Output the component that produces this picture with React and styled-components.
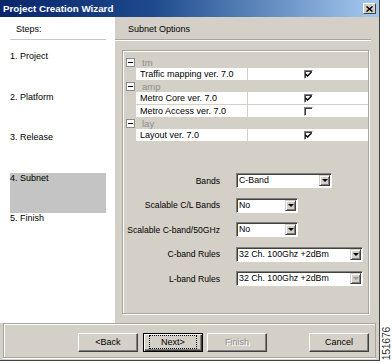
import React from "react";
import styled, { createGlobalStyle } from "styled-components";

const GlobalStyle = createGlobalStyle`
  body {
    margin: 0;
    background: #fff;
    font-family: "Liberation Sans", Arial, sans-serif;
    font-size: 9px;
    color: #000;
  }
`;

const Page = styled.div`
  display: flex;
  width: 392px;
  height: 363px;
  background: #fff;
`;

const Window = styled.div`
  width: 382px;
  height: 361px;
  box-sizing: border-box;
  display: flex;
  flex-direction: column;
  background: #d4d0c8;
  border-right: 1px solid #404040;
  border-bottom: 1px solid #404040;
`;

const TitleBar = styled.div`
  height: 17px;
  flex: none;
  display: flex;
  align-items: center;
  justify-content: space-between;
  padding: 0 3px;
  background: linear-gradient(to right, #0a246a, #1d4a8c 40%, #a6caf0);
  color: #fff;
  font-weight: bold;
  font-size: 9.8px;
`;

const CloseButton = styled.div`
  width: 13px;
  height: 11px;
  box-sizing: border-box;
  display: flex;
  align-items: center;
  justify-content: center;
  background: #d4d0c8;
  border: 1px solid;
  border-color: #fff #404040 #404040 #fff;
`;

const Body = styled.div`
  height: 306px;
  flex: none;
  display: flex;
  margin-right: 3px;
`;

const StepsPanel = styled.div`
  width: 115px;
  flex: none;
  background: #fff;
`;

const PanelHeader = styled.div`
  height: 21px;
  padding: 1px 0 0 ${(p) => p.$indent}px;
  margin: ${(p) => p.$margin};
  display: flex;
  align-items: center;
  border-bottom: 1px solid ${(p) => p.$line};
  box-shadow: ${(p) => (p.$etched ? "0 1px 0 #fff" : "none")};
`;

const StepList = styled.div`
  margin: 11px 9px 0 10px;
`;

const Step = styled.div`
  height: 40.5px;
  line-height: 10px;
  background: ${(p) => (p.$active ? "#c4c4c4" : "transparent")};
`;

const OptionsPanel = styled.div`
  flex: 1;
  display: flex;
  flex-direction: column;
  padding-right: 5px;
`;

const GroupBox = styled.div`
  flex: 1;
  margin: 10px 2px 9px 7px;
  border: 1px solid #a8a59e;
  box-shadow: inset 1px 1px 0 #fff, 1px 1px 0 #fff;
  padding: 5px 0 0 0;
  display: flex;
  flex-direction: column;
`;

const TreeHeader = styled.div`
  height: 12px;
  display: flex;
  align-items: center;
  color: #8d8d8d;
  font-size: 9.5px;
`;

const Toggle = styled.span`
  width: 9px;
  height: 9px;
  box-sizing: border-box;
  margin: 0 7px 0 3px;
  border: 1px solid #8d8d8d;
  background: #fff;
  display: flex;
  align-items: center;
  justify-content: center;
  &::after {
    content: "";
    width: 5px;
    height: 1px;
    background: #000;
  }
`;

const TreeRow = styled.div`
  height: 12px;
  margin: 0 0 ${(p) => (p.$last ? 1 : 0)}px 13px;
  display: flex;
  gap: 1px;
`;

const NameCell = styled.div`
  width: 111px;
  background: #fff;
  padding-left: 4px;
  box-sizing: border-box;
  display: flex;
  align-items: center;
`;

const ValueCell = styled.div`
  flex: 1;
  background: #fff;
  display: flex;
  align-items: center;
  justify-content: center;
`;

const CheckBox = styled.span`
  width: 9px;
  height: 9px;
  box-sizing: border-box;
  border: 1px solid;
  border-color: #808080 #fff #fff #808080;
  box-shadow: inset 1px 1px 0 #404040;
  background: #fff;
  display: flex;
  align-items: center;
  justify-content: center;
`;

const Form = styled.div`
  margin-top: 32px;
  display: grid;
  grid-template-columns: 97px 1fr;
  column-gap: 16px;
  row-gap: 9.5px;
  align-items: center;
`;

const Label = styled.div`
  text-align: right;
  white-space: nowrap;
  font-size: 8.6px;
`;

const Select = styled.div`
  width: ${(p) => p.$width}px;
  height: 15px;
  box-sizing: border-box;
  display: flex;
  background: #fff;
  border: 1px solid;
  border-color: #808080 #fff #fff #808080;
  box-shadow: inset 1px 1px 0 #404040;
  padding: 1px;
`;

const SelectValue = styled.div`
  flex: 1;
  padding-left: 1px;
  line-height: 11px;
  white-space: nowrap;
  font-size: 8.8px;
`;

const ArrowButton = styled.div`
  width: 11px;
  box-sizing: border-box;
  background: #d4d0c8;
  border: 1px solid;
  border-color: #d4d0c8 #404040 #404040 #d4d0c8;
  box-shadow: inset 1px 1px 0 #fff, inset -1px -1px 0 #808080;
  display: flex;
  align-items: center;
  justify-content: center;
  &::after {
    content: "";
    border-left: 3px solid transparent;
    border-right: 3px solid transparent;
    border-top: 3px solid ${(p) => (p.$dim ? "#9a9a9a" : "#000")};
  }
`;

const Footer = styled.div`
  height: 35px;
  flex: none;
  box-sizing: border-box;
  margin: 0 3px;
  border: 1px solid #a8a59e;
  box-shadow: inset 1px 1px 0 #fff, 0 1px 0 #fff;
  display: flex;
  align-items: center;
  padding: 3px 6px 0 74px;
  gap: 4px;
`;

const Spacer = styled.div`
  flex: 1;
`;

const Button = styled.div`
  width: 60px;
  height: 19px;
  box-sizing: border-box;
  display: flex;
  align-items: center;
  justify-content: center;
  background: #d4d0c8;
  border: 1px solid;
  border-color: ${(p) => (p.$default ? "#000" : "#fff #404040 #404040 #fff")};
  box-shadow: ${(p) =>
    p.$default
      ? "inset 1px 1px 0 #fff, inset -1px -1px 0 #404040, inset -2px -2px 0 #808080"
      : "inset -1px -1px 0 #808080"};
  color: ${(p) => (p.$disabled ? "#8d8d8d" : "#000")};
  text-shadow: ${(p) => (p.$disabled ? "1px 1px 0 #fff" : "none")};
  margin-right: ${(p) => p.$after || 0}px;
`;

const FocusText = styled.span`
  padding: 1px 11px;
  outline: 1px dotted #000;
`;

const Side = styled.div`
  flex: 1;
  display: flex;
  flex-direction: column;
  justify-content: flex-end;
  align-items: center;
  padding-bottom: 3px;
`;

const FigureNumber = styled.div`
  writing-mode: vertical-rl;
  transform: rotate(180deg);
  font-size: 10.5px;
  color: #333;
  letter-spacing: -0.3px;
`;

const steps = ["1. Project", "2. Platform", "3. Release", "4. Subnet", "5. Finish"];

const tree = [
  { name: "tm", rows: [{ label: "Traffic mapping ver. 7.0", on: true }] },
  {
    name: "amp",
    rows: [
      { label: "Metro Core ver. 7.0", on: true },
      { label: "Metro Access ver. 7.0", on: false },
    ],
  },
  { name: "lay", rows: [{ label: "Layout ver. 7.0", on: true }] },
];

const fields = [
  { label: "Bands", value: "C-Band", width: 96 },
  { label: "Scalable C/L Bands", value: "No", width: 62 },
  { label: "Scalable C-band/50GHz", value: "No", width: 62 },
  { label: "C-band Rules", value: "32 Ch. 100Ghz +2dBm", width: 127 },
  { label: "L-band Rules", value: "32 Ch. 100Ghz +2dBm", width: 127, dim: true },
];

const Check = () => (
  <svg width="7" height="7" viewBox="0 0 7 7">
    <path d="M0.5 3 L2.5 5 L6.5 1" fill="none" stroke="#000" strokeWidth="1.4" />
  </svg>
);

export default function App() {
  return (
    <>
      <GlobalStyle />
      <Page>
        <Window>
          <TitleBar>
            <span>Project Creation Wizard</span>
            <CloseButton>
              <svg width="7" height="6" viewBox="0 0 7 6">
                <path d="M0.5 0.5 L6.5 5.5 M6.5 0.5 L0.5 5.5" stroke="#000" strokeWidth="1.5" />
              </svg>
            </CloseButton>
          </TitleBar>
          <Body>
            <StepsPanel>
              <PanelHeader $indent={6} $margin="0 9px 0 10px" $line="#c8c8c8">
                Steps:
              </PanelHeader>
              <StepList>
                {steps.map((s) => (
                  <Step key={s} $active={s === "4. Subnet"}>
                    {s}
                  </Step>
                ))}
              </StepList>
            </StepsPanel>
            <OptionsPanel>
              <PanelHeader $indent={13} $margin="0" $line="#a8a59e" $etched>
                Subnet Options
              </PanelHeader>
              <GroupBox>
                {tree.map((g) => (
                  <div key={g.name}>
                    <TreeHeader>
                      <Toggle />
                      {g.name}
                    </TreeHeader>
                    {g.rows.map((r, i) => (
                      <TreeRow key={r.label} $last={i === g.rows.length - 1 ? 0 : 1}>
                        <NameCell>{r.label}</NameCell>
                        <ValueCell>
                          <CheckBox>{r.on && <Check />}</CheckBox>
                        </ValueCell>
                      </TreeRow>
                    ))}
                  </div>
                ))}
                <Form>
                  {fields.map((f) => (
                    <React.Fragment key={f.label}>
                      <Label>{f.label}</Label>
                      <Select $width={f.width}>
                        <SelectValue>{f.value}</SelectValue>
                        <ArrowButton $dim={f.dim} />
                      </Select>
                    </React.Fragment>
                  ))}
                </Form>
              </GroupBox>
            </OptionsPanel>
          </Body>
          <Footer>
            <Button $after={1}>&lt;Back</Button>
            <Button $default>
              <FocusText>Next&gt;</FocusText>
            </Button>
            <Button $disabled>Finish</Button>
            <Spacer />
            <Button>Cancel</Button>
          </Footer>
        </Window>
        <Side>
          <FigureNumber>151676</FigureNumber>
        </Side>
      </Page>
    </>
  );
}
